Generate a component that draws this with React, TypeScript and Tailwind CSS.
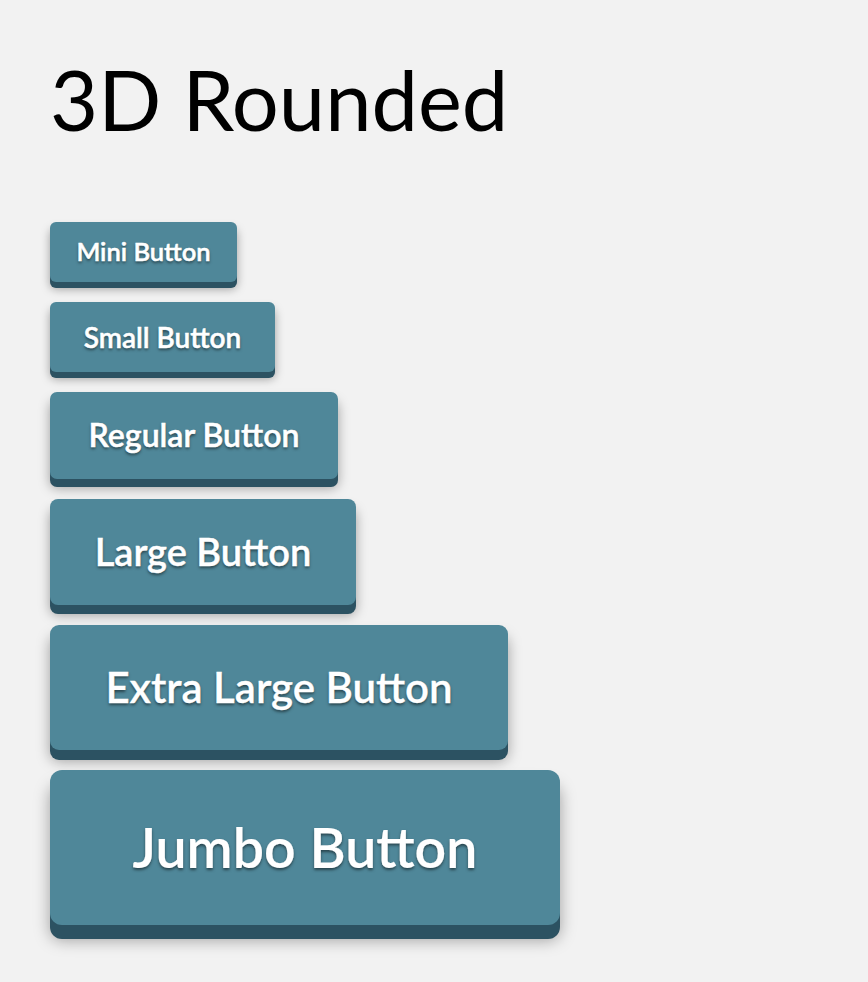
const buttons = [
  { label: "Mini Button", size: "w-[187px] h-[60px] text-[25.5px] rounded-[6px] [-webkit-text-stroke:0.5px_#fff] shadow-[0_6px_0_#2c5262,0_7px_10px_rgba(0,0,0,0.35)]" },
  { label: "Small Button", size: "w-[225px] h-[70px] text-[28px] rounded-[6px] [-webkit-text-stroke:0.5px_#fff] shadow-[0_6px_0_#2c5262,0_7px_10px_rgba(0,0,0,0.35)]" },
  { label: "Regular Button", size: "w-[288px] h-[87px] text-[32px] rounded-[7px] [-webkit-text-stroke:0.5px_#fff] shadow-[0_8px_0_#2c5262,0_9px_12px_rgba(0,0,0,0.35)]" },
  { label: "Large Button", size: "w-[306px] h-[106px] text-[38px] rounded-[8px] [-webkit-text-stroke:0.4px_#fff] shadow-[0_9px_0_#2c5262,0_10px_12px_rgba(0,0,0,0.35)]" },
  { label: "Extra Large Button", size: "w-[458px] h-[125px] text-[42px] rounded-[9px] [-webkit-text-stroke:0.3px_#fff] shadow-[0_10px_0_#2c5262,0_11px_14px_rgba(0,0,0,0.35)]" },
  { label: "Jumbo Button", size: "w-[510px] h-[155px] text-[55.5px] rounded-[12px] [-webkit-text-stroke:0.2px_#fff] shadow-[0_14px_0_#2c5262,0_15px_16px_rgba(0,0,0,0.35)]" },
];

export default function App() {
  return (
    <div className="min-h-screen bg-[#f2f2f2] px-[50px] pt-[50px] font-['Lato',sans-serif]">
      <h1 className="text-[83px] font-normal leading-[1.2] text-black">3D Rounded</h1>

      <div className="mt-[72px] flex flex-col items-start gap-5">
        {buttons.map((b) => (
          <button
            key={b.label}
            className={`flex items-center justify-center bg-[#4f8799] font-semibold text-white [text-shadow:0_2px_3px_rgba(0,0,0,0.5)] ${b.size}`}
          >
            {b.label}
          </button>
        ))}
      </div>
    </div>
  );
}
